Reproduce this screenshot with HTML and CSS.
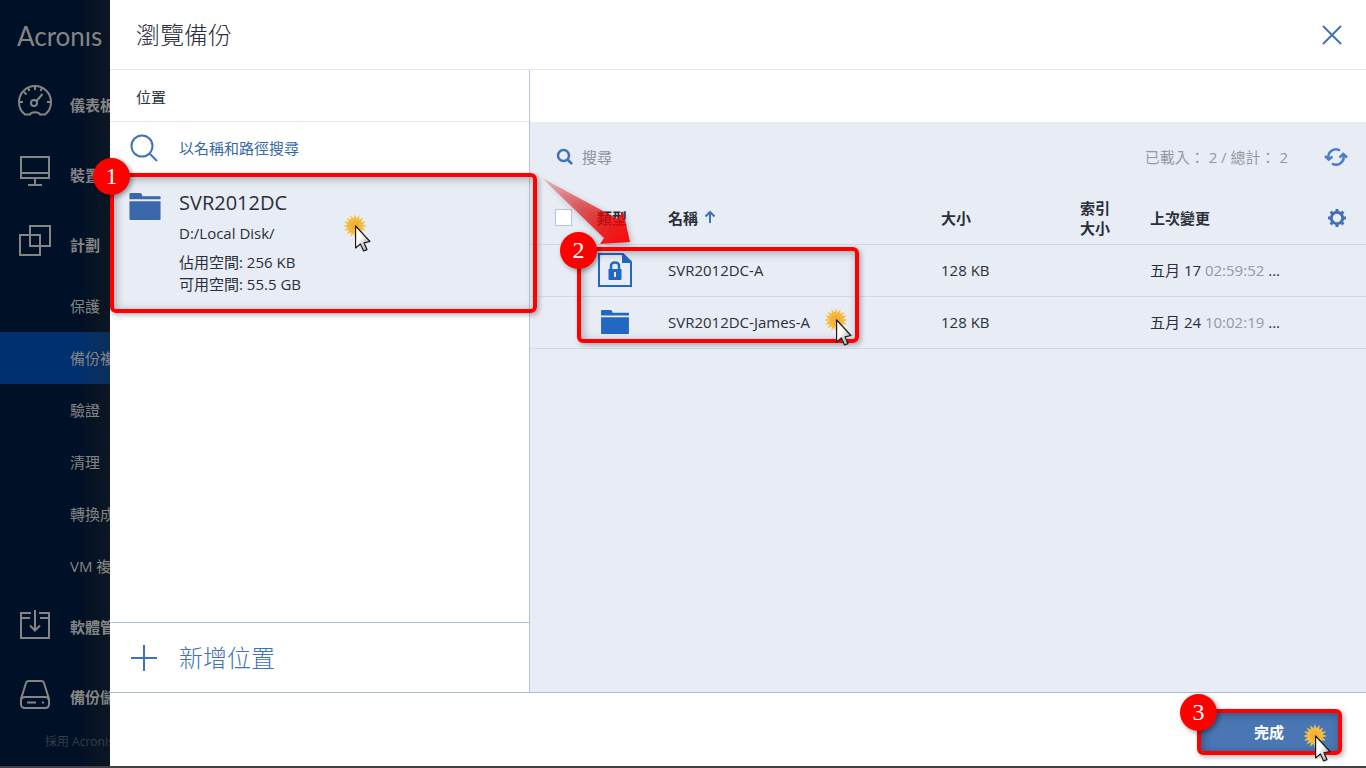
FILE: index.html
```html
<!DOCTYPE html>
<html lang="zh-Hant">
<head>
    <meta charset="UTF-8">
    <meta name="viewport" content="width=device-width, initial-scale=1.0">
    <title>瀏覽備份</title>
    <link rel="stylesheet" href="styles.css">
</head>
<body>
    <!-- shared shapes -->
    <svg class="defs" width="0" height="0" aria-hidden="true">
        <defs>
            <linearGradient id="pointer-fill" x1="0" y1="0" x2="1" y2="1">
                <stop offset="0.4" stop-color="#ffffff"/>
                <stop offset="1" stop-color="#8c8c8c"/>
            </linearGradient>
            <radialGradient id="burst-fill">
                <stop offset="0" stop-color="#f5a52c"/>
                <stop offset="1" stop-color="#f3cd55"/>
            </radialGradient>
            <symbol id="click" viewBox="0 0 30 40">
                <path fill="url(#burst-fill)" d="M12 0L13.5 4.6L16.6 .9L16.2 5.8L20.5 3.5L18.2 7.8L23.1 7.4L19.4 10.5L24 12L19.4 13.5L23.1 16.6L18.2 16.2L20.5 20.5L16.2 18.2L16.6 23.1L13.5 19.4L12 24L10.5 19.4L7.4 23.1L7.8 18.2L3.5 20.5L5.8 16.2L.9 16.6L4.6 13.5L0 12L4.6 10.5L.9 7.4L5.8 7.8L3.5 3.5L7.8 5.8L7.4 .9L10.5 4.6Z"/>
                <path fill="url(#pointer-fill)" stroke="#1c1c1c" stroke-width="1.2" stroke-linejoin="round" d="M12.6 12V34L17.4 30L20.6 37L24 35.6L21 28.8L27 27.5Z"/>
            </symbol>
            <symbol id="folder" viewBox="0 0 32 28">
                <path d="M1 2Q1 1 2 1H11.500Q13 1 13.500 4H31V7H1ZM1 9H31V26Q31 27 30 27H2Q1 27 1 26Z"/>
            </symbol>
        </defs>
    </svg>

    <div class="app">
        <nav class="sidebar">
            <div class="logo">Acronıs</div>
            <a class="nav-item" href="#">
                <svg width="36" height="34" viewBox="0 0 36 34">
                    <path d="M8 30.500C4 27.500 2 23.500 2 18A16 16 0 0 1 34 18C34 23.500 32 27.500 28 30.500H23C22 27.500 14 27.500 13 30.500Z"/>
                    <circle cx="17" cy="19" r="3"/>
                    <path d="M19.500 17L25.500 10M18 2V6M7 8L9.500 10.500M2 18H6M30 18H34M11 4L12.500 7M25 4L23.500 7"/>
                </svg>
                <span>儀表板</span>
            </a>
            <a class="nav-item" href="#">
                <svg width="36" height="34" viewBox="0 0 36 34">
                    <path d="M4 3H32V24H4ZM4 19H32M18 24V31M11 31H25"/>
                </svg>
                <span>裝置</span>
            </a>
            <a class="nav-item" href="#">
                <svg width="36" height="34" viewBox="0 0 36 34">
                    <path d="M13 2H33V22H13ZM3 11H23V31H3Z"/>
                </svg>
                <span>計劃</span>
            </a>
            <a class="sub-item" href="#">保護</a>
            <a class="sub-item active" href="#">備份複本</a>
            <a class="sub-item" href="#">驗證</a>
            <a class="sub-item" href="#">清理</a>
            <a class="sub-item" href="#">轉換成 VM</a>
            <a class="sub-item" href="#">VM 複寫</a>
            <a class="nav-item" href="#">
                <svg width="36" height="34" viewBox="0 0 36 34">
                    <path d="M14 7H4V32H32V7H22M4 12H13M23 12H32M18 4V24M13 19.500L18 24.500L23 19.500"/>
                </svg>
                <span>軟體管理</span>
            </a>
            <a class="nav-item" href="#">
                <svg width="36" height="34" viewBox="0 0 36 34">
                    <path d="M9 7Q9.500 5 12 5H24Q26.500 5 27 7L32 23V28Q32 32 28 32H8Q4 32 4 28V23ZM4 24Q5 21 8 21H28Q31 21 32 24M10 26.500H19M25 26.500H27"/>
                </svg>
                <span>備份儲存</span>
            </a>
            <p class="powered">採用 Acronis 技術</p>
        </nav>

        <main class="panel">
            <header class="panel-header">
                <h1>瀏覽備份</h1>
                <button class="close" type="button" aria-label="關閉">
                    <svg width="20" height="20" viewBox="0 0 20 20"><path d="M1 1L19 19M19 1L1 19"/></svg>
                </button>
            </header>

            <div class="panel-body">
                <section class="locations">
                    <h2>位置</h2>
                    <label class="location-search">
                        <svg width="30" height="28" viewBox="0 0 30 28"><circle cx="12" cy="12" r="10.500"/><path d="M19.500 19.500L27 27"/></svg>
                        <input type="text" placeholder="以名稱和路徑搜尋">
                    </label>
                    <div class="location">
                        <svg class="location-icon" width="34" height="29"><use href="#folder"/></svg>
                        <div>
                            <h3>SVR2012DC</h3>
                            <p class="path">D:/Local Disk/</p>
                            <p>佔用空間: 256 KB</p>
                            <p>可用空間: 55.5 GB</p>
                        </div>
                        <div class="mark mark-location"><span class="badge">1</span></div>
                        <svg class="click click-location"><use href="#click"/></svg>
                    </div>
                    <button class="add-location" type="button">
                        <svg width="28" height="28" viewBox="0 0 28 28"><path d="M14 1V27M1 14H27"/></svg>
                        新增位置
                    </button>
                </section>

                <section class="archives">
                    <div class="toolbar">
                        <label class="archive-search">
                            <svg width="18" height="18" viewBox="0 0 18 18"><circle cx="7.500" cy="7.500" r="5.500"/><path d="M11.500 11.500L16 16"/></svg>
                            <input type="text" placeholder="搜尋">
                        </label>
                        <span class="count">已載入： 2 / 總計： 2</span>
                        <button class="refresh" type="button" aria-label="重新整理">
                            <svg width="24" height="20" viewBox="0 0 24 20">
                                <path d="M4.500 11A7.500 7.500 0 0 1 16 3.500M19.500 9A7.500 7.500 0 0 1 8 16.500"/>
                                <path d="M1 9L4.700 12.500L8.500 9.500M15.500 10.500L19.300 7L23 10.500"/>
                            </svg>
                        </button>
                    </div>
                    <table>
                        <colgroup>
                            <col class="col-check"><col class="col-type"><col><col class="col-size"><col class="col-index"><col class="col-date"><col class="col-gear">
                        </colgroup>
                        <thead>
                            <tr>
                                <th class="check"><input type="checkbox" aria-label="全選"></th>
                                <th>類型</th>
                                <th>名稱 <svg class="sort" width="12" height="14" viewBox="0 0 12 14"><path d="M6 13V2M1.500 6.500L6 2L10.500 6.500"/></svg></th>
                                <th>大小</th>
                                <th>索引<br>大小</th>
                                <th>上次變更</th>
                                <th>
                                    <button class="gear" type="button" aria-label="設定">
                                        <svg width="20" height="20" viewBox="0 0 20 20">
                                            <circle cx="10" cy="10" r="5.700"/>
                                            <path d="M10 1V4M10 16V19M1 10H4M16 10H19M3.600 3.600L5.700 5.700M14.300 14.300L16.400 16.400M16.400 3.600L14.300 5.700M5.700 14.300L3.600 16.400"/>
                                        </svg>
                                    </button>
                                </th>
                            </tr>
                        </thead>
                        <tbody>
                            <tr>
                                <td></td>
                                <td>
                                    <svg class="file-icon" width="36" height="36" viewBox="0 0 36 36">
                                        <path fill="none" stroke="#2267c4" stroke-width="2" d="M2 2H26L34 10V34H2Z"/>
                                        <path d="M25 1L35 11H25ZM11.500 17H24.500V27Q24.500 28 23.500 28H12.500Q11.500 28 11.500 27Z"/>
                                        <path fill="none" stroke="#2267c4" stroke-width="2.500" d="M14 18V14Q14 10.500 18 10.500T22 14V18"/>
                                        <path fill="#e8ecf5" d="M17 20H19V25H17Z"/>
                                    </svg>
                                </td>
                                <td>SVR2012DC-A</td>
                                <td>128 KB</td>
                                <td></td>
                                <td>五月 17 <span class="time">02:59:52</span> ...</td>
                                <td></td>
                            </tr>
                            <tr>
                                <td></td>
                                <td><svg class="file-icon indent" width="30" height="26"><use href="#folder"/></svg></td>
                                <td>SVR2012DC-James-A</td>
                                <td>128 KB</td>
                                <td></td>
                                <td>五月 24 <span class="time">10:02:19</span> ...</td>
                                <td></td>
                            </tr>
                        </tbody>
                    </table>
                    <!-- arrow from step 1 to step 2 -->
                    <svg class="arrow" width="96" height="72" viewBox="0 0 96 72">
                        <defs>
                            <linearGradient id="arrow-fill" x1="0" y1="0" x2="1" y2="1">
                                <stop offset="0" stop-color="#e00000" stop-opacity="0.2"/>
                                <stop offset="0.75" stop-color="#f00808" stop-opacity="0.85"/>
                                <stop offset="1" stop-color="#ff0808"/>
                            </linearGradient>
                        </defs>
                        <path fill="url(#arrow-fill)" d="M2 1L78 42L83 34L90 65L60 67L64 61Z"/>
                    </svg>
                    <div class="mark mark-archives"><span class="badge">2</span></div>
                    <svg class="click click-archives"><use href="#click"/></svg>
                </section>
            </div>

            <footer class="panel-footer">
                <div class="done-wrap">
                    <button class="done" type="button">完成</button>
                    <div class="mark mark-done"><span class="badge">3</span></div>
                    <svg class="click click-done"><use href="#click"/></svg>
                </div>
            </footer>
        </main>
    </div>
</body>
</html>
```
FILE: styles.css
```css
* {
    margin: 0;
    padding: 0;
    box-sizing: border-box;
}

body {
    font-family: 'Open Sans', 'Noto Sans CJK TC', sans-serif;
    font-size: 15px;
    line-height: 20px;
    color: #2a2f3a;
    background: #404144;
}

button,
input {
    font: inherit;
    color: inherit;
    border: none;
    background: none;
}

button {
    cursor: pointer;
}

svg {
    display: block;
    flex-shrink: 0;
}

.defs {
    position: absolute;
}

.app {
    display: flex;
    height: 100vh;
    border-bottom: 2px solid #404144;
}

/* sidebar */
.sidebar {
    width: 110px;
    overflow: hidden;
    white-space: nowrap;
    color: #858585;
    background: linear-gradient(to right, #001026 70%, #0d1722);
}

.sidebar a {
    display: flex;
    color: inherit;
    text-decoration: none;
}

.logo {
    height: 70px;
    padding-left: 17px;
    font-family: Lato, sans-serif;
    font-size: 26px;
    line-height: 72px;
}

.nav-item {
    height: 70px;
    padding: 14px 0 0 17px;
    gap: 17px;
    font-weight: bold;
}

.nav-item svg {
    fill: none;
    stroke: #858585;
    stroke-width: 2;
}

.nav-item span {
    line-height: 42px;
}

.sub-item {
    height: 52px;
    padding-left: 70px;
    align-items: center;
}

.sub-item.active {
    background: linear-gradient(to right, #003070 70%, #0c2f5a);
}

.powered {
    padding-left: 45px;
    font-size: 12px;
    color: #343e4c;
}

/* panel */
.panel {
    flex: 1;
    min-width: 0;
    display: flex;
    flex-direction: column;
    background: #fff;
}

.panel-header {
    height: 70px;
    padding: 0 24px 0 26px;
    display: flex;
    align-items: center;
    justify-content: space-between;
    border-bottom: 1px solid #e3e7f1;
}

.panel-header h1 {
    font-size: 24px;
    font-weight: 300;
    line-height: 32px;
}

.close svg,
.add-location svg,
.location-search svg {
    fill: none;
    stroke: #3f73b5;
    stroke-width: 2;
}

.panel-body {
    flex: 1;
    display: flex;
}

.locations {
    width: 420px;
    display: flex;
    flex-direction: column;
    border-right: 1px solid #b5c3dc;
}

.locations h2 {
    height: 52px;
    padding-left: 26px;
    font-size: 15px;
    font-weight: normal;
    line-height: 54px;
    border-bottom: 1px solid #e3e7f1;
}

.location-search {
    height: 52px;
    padding: 0 20px;
    display: flex;
    align-items: center;
    gap: 19px;
}

.location-search input {
    flex: 1;
}

.location-search input::placeholder {
    color: #3567a8;
}

.location {
    position: relative;
    height: 138px;
    padding: 18px 18px 0;
    display: flex;
    gap: 17px;
    line-height: 22px;
    background: #e8ecf5;
}

.location-icon {
    fill: #3a68ab;
}

.location h3 {
    font-size: 20px;
    font-weight: normal;
    line-height: 22px;
}

.location .path {
    padding: 8px 0 7px;
}

.add-location {
    height: 70px;
    margin-top: auto;
    padding-left: 20px;
    display: flex;
    align-items: center;
    gap: 21px;
    font-size: 24px;
    font-weight: 300;
    color: #3f73b5;
    border-top: 1px solid #a9bedb;
}

.archives {
    position: relative;
    flex: 1;
    min-width: 0;
    padding-top: 52px;
    background: linear-gradient(#fff 52px, #e8ecf5 52px);
}

.toolbar {
    height: 70px;
    padding: 0 18px 0 26px;
    display: flex;
    align-items: center;
}

.archive-search {
    flex: 1;
    display: flex;
    align-items: center;
    gap: 8px;
}

.archive-search svg {
    fill: none;
    stroke: #3f73b5;
    stroke-width: 2.5;
}

.archive-search input::placeholder {
    color: #8b919d;
}

.count {
    margin-right: 36px;
    color: #9599a3;
}

.refresh svg {
    fill: none;
    stroke: #4b7fc4;
    stroke-width: 2.5;
}

/* archive table */
table {
    width: 100%;
    table-layout: fixed;
    border-collapse: collapse;
}

.col-check { width: 67px; }
.col-type { width: 71px; }
.col-size { width: 139px; }
.col-index { width: 70px; }
.col-date { width: 157px; }
.col-gear { width: 59px; }

th,
td {
    height: 52px;
    text-align: left;
    white-space: nowrap;
    border-bottom: 1px solid #cddaeb;
}

.check {
    padding-left: 25px;
}

.check input {
    display: block;
    width: 17px;
    height: 17px;
    appearance: none;
    background: #fff;
    border: 1px solid #b5c3e0;
}

.sort {
    display: inline-block;
    margin-left: 2px;
    fill: none;
    stroke: #3f73b5;
    stroke-width: 2;
}

.gear {
    display: block;
    margin-left: 20px;
}

.gear svg {
    fill: none;
    stroke: #3f73b5;
    stroke-width: 3;
}

.file-icon {
    fill: #2267c4;
}

.indent {
    margin-left: 3px;
}

.time {
    color: #9599a3;
}

/* footer */
.panel-footer {
    height: 74px;
    padding: 19px 28px 0;
    display: flex;
    justify-content: flex-end;
    border-top: 1px solid #a9bedb;
}

.done-wrap {
    position: relative;
    height: 40px;
}

.done {
    width: 138px;
    height: 40px;
    font-weight: bold;
    color: #fff;
    background: #4a77b4;
}

/* step marks */
.mark {
    position: absolute;
    border: 4px solid #f00;
    border-radius: 6px;
    box-shadow: 2px 2px 5px rgba(0, 0, 0, 0.3), inset 2px 2px 8px rgba(0, 0, 0, 0.3);
    pointer-events: none;
}

.mark-location {
    inset: -1px -8px -1px 0;
    z-index: 2;
}

.mark-archives {
    top: 177px;
    left: 47px;
    width: 282px;
    height: 96px;
}

.mark-done {
    inset: -3px -4px -3px -3px;
}

.badge {
    position: absolute;
    top: -19px;
    left: -21px;
    width: 37px;
    height: 37px;
    font-family: 'Liberation Serif', serif;
    font-size: 24px;
    line-height: 36px;
    text-align: center;
    color: #fff;
    background: #f00;
    border-radius: 50%;
    box-shadow: 2px 2px 5px rgba(0, 0, 0, 0.4);
}

.arrow {
    position: absolute;
    top: 107px;
    left: 10px;
    filter: drop-shadow(1px 2px 3px rgba(0, 0, 0, 0.3));
}

.click {
    position: absolute;
    width: 30px;
    height: 40px;
}

.click-location {
    top: 40px;
    left: 233px;
}

.click-archives {
    top: 238px;
    left: 294px;
}

.click-done {
    top: 12px;
    right: 5px;
}
```
